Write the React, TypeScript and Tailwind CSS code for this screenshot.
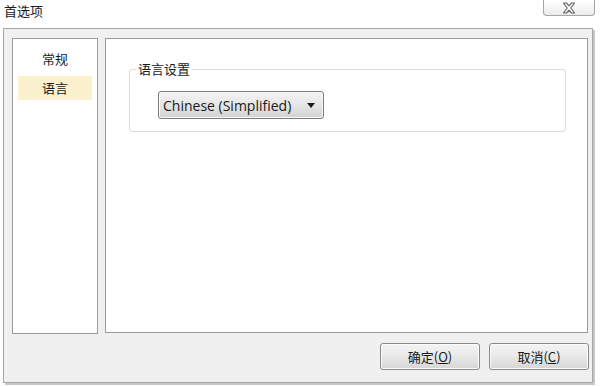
import React from "react";

const font = { fontFamily: '"Noto Sans CJK SC", "Microsoft YaHei", sans-serif' };

function CloseIcon() {
  return (
    <svg width="16" height="12" viewBox="0 0 16 12">
      <path
        d="M2.5 1 L5.5 1 L8 3.8 L10.5 1 L13.5 1 L9.8 6 L13.5 11 L10.5 11 L8 8.2 L5.5 11 L2.5 11 L6.2 6 Z"
        fill="#ffffff"
        stroke="#666666"
        strokeWidth="1.2"
        strokeLinejoin="round"
      />
    </svg>
  );
}

function Btn({ label, k }: { label: string; k: string }) {
  return (
    <button className="w-[100px] h-[27px] rounded-[3px] border border-[#8a8a8a] bg-gradient-to-b from-[#f4f4f4] via-[#e8e8e8] to-[#d6d6d6] text-[13px] text-[#1a1a1a] flex items-center justify-center shadow-[inset_0_0_0_1px_#fbfbfb]">
      {label}(<span className="underline">{k}</span>)
    </button>
  );
}

export default function App() {
  return (
    <div className="w-[600px] h-[386px] bg-white relative overflow-hidden text-[#1a1a1a]" style={font}>
      <div className="h-[28px] flex items-start justify-between pl-[4px] pr-[5px]">
        <div className="text-[13px] leading-[16px] pt-[3px]">首选项</div>
        <div className="w-[52px] h-[16px] rounded-b-[4px] border border-t-0 border-[#a5a5a5] bg-gradient-to-b from-[#ffffff] to-[#ececec] flex items-center justify-center">
          <CloseIcon />
        </div>
      </div>
      <div className="ml-[3px] w-[590px] h-[355px] border border-[#a6a6a6] bg-[#f0f0f0] shadow-[2px_2px_0_#c8c8c8] flex flex-col pt-[9px] pl-[8px]">
        <div className="flex gap-[7px] h-[296px]">
          <div className="w-[86px] h-full bg-white border border-[#9a9a9a] flex flex-col items-center pt-[8px] text-[13px]">
            <div className="h-[24px] flex items-center">常规</div>
            <div className="mt-[5px] w-[74px] h-[24px] bg-[#fcf1cf] flex items-center justify-center">语言</div>
          </div>
          <div className="w-[483px] h-[295px] bg-white border border-[#9a9a9a] pt-[30px] pl-[23px]">
            <div className="relative w-[437px] h-[63px] border border-[#dcdcdc] rounded-[3px]">
              <div className="absolute left-[6px] top-[-9px] bg-white px-[2px] text-[13px] leading-[16px]">语言设置</div>
              <div className="mt-[21px] ml-[28px] w-[166px] h-[28px] rounded-[3px] border border-[#7c7c7c] bg-gradient-to-b from-[#f3f3f3] via-[#e6e6e6] to-[#d2d2d2] flex items-center pl-[4px] pr-[8px] justify-between shadow-[inset_0_0_0_1px_#f8f8f8]">
                <span className="text-[14px]" style={{ fontFamily: '"Open Sans", "Noto Sans", sans-serif' }}>Chinese (Simplified)</span>
                <svg width="8" height="5" viewBox="0 0 8 5"><path d="M0 0 L8 0 L4 5 Z" fill="#1a1a1a" /></svg>
              </div>
            </div>
          </div>
        </div>
        <div className="flex justify-end gap-[9px] mt-[9px] pr-[3px]">
          <Btn label="确定" k="O" />
          <Btn label="取消" k="C" />
        </div>
      </div>
    </div>
  );
}
